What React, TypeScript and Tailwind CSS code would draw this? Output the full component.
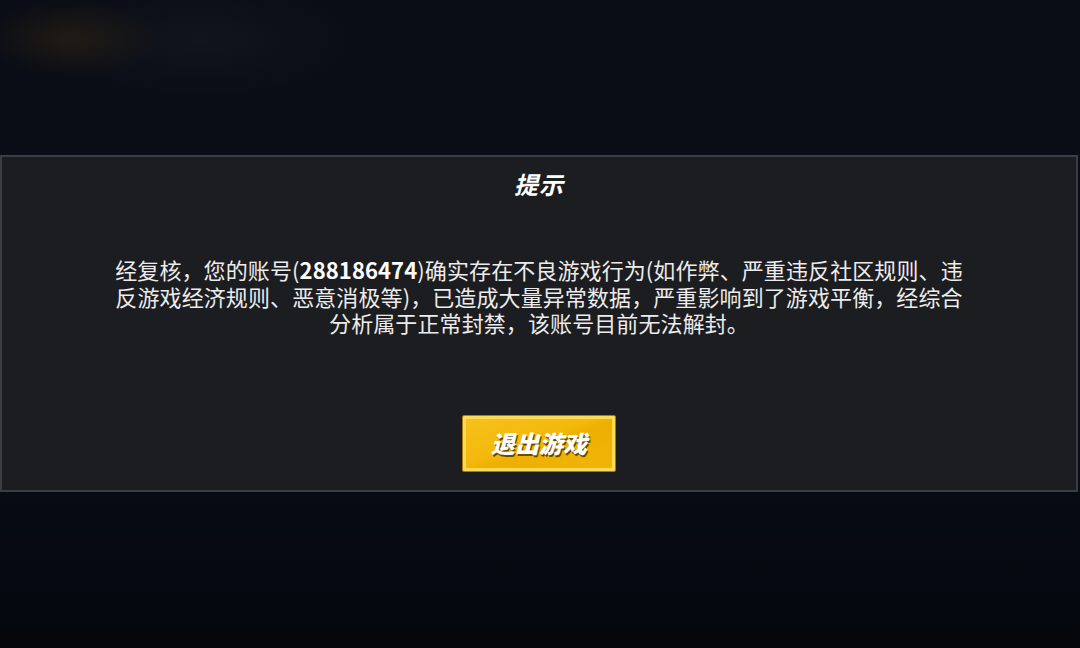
import React from "react";

const cjk = { fontFamily: '"Noto Sans CJK SC", "Noto Sans", sans-serif' };

export default function App() {
  return (
    <div
      className="w-[1080px] h-[648px] overflow-hidden bg-[#0a0d16] flex flex-col"
      style={cjk}
    >
      <div className="h-[155px] w-full bg-[radial-gradient(ellipse_90px_40px_at_70px_38px,rgba(70,50,15,0.35),transparent),radial-gradient(ellipse_160px_60px_at_200px_40px,rgba(40,42,50,0.25),transparent)]" />
      <div className="w-[1078px] h-[337px] border-2 border-[#3a3d43] bg-[#1c1d20] flex flex-col items-center">
        <div className="mt-[11px] h-[32px] leading-[32px] text-[24px] font-bold italic text-white tracking-[1px]">
          提示
        </div>
        <div className="mt-[56px] text-[22px] leading-[26.5px] text-[#ececec] text-center tracking-[0.1px]">
          <div>
            经复核，您的账号(<span className="font-bold text-white">288186474</span>)确实存在不良游戏行为(如作弊、严重违反社区规则、违
          </div>
          <div>反游戏经济规则、恶意消极等)，已造成大量异常数据，严重影响到了游戏平衡，经综合</div>
          <div>分析属于正常封禁，该账号目前无法解封。</div>
        </div>
        <div className="mt-[79px] w-[154px] h-[57px] rounded-[2px] border border-[#a77c00] bg-[#fbdb55] p-[3px]">
          <div className="w-full h-full bg-[linear-gradient(160deg,#f7c21c_0%,#f3b80c_45%,#eeb000_55%,#f1b405_100%)] flex items-center justify-center">
            <span className="text-[24px] font-black italic text-white [text-shadow:1px_2px_0_#6b4a00]">
              退出游戏
            </span>
          </div>
        </div>
      </div>
      <div className="flex-1 w-full bg-[linear-gradient(180deg,#070b14,#05070d)]" />
    </div>
  );
}
